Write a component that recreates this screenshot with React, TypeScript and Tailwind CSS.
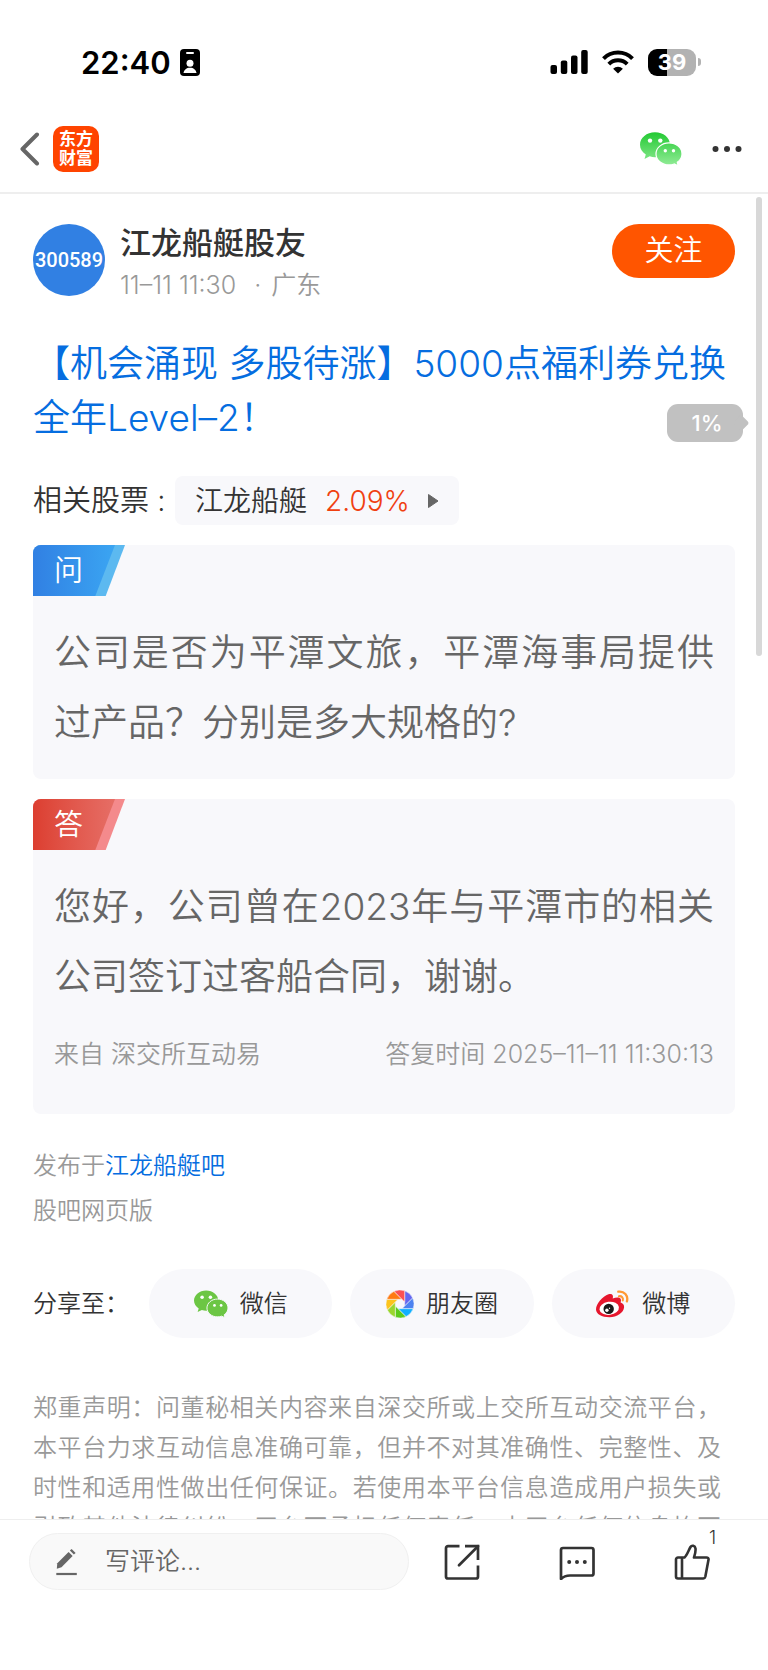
import type { ReactNode } from 'react';

const BLADE_COLORS = ['#6467f0', '#4d82f0', '#12b0ff', '#5ccb1c', '#9ad62e', '#fcc41c', '#ff7a12', '#fa5053'];

function WechatIcon({ id, from, to, outline, className }: {
  id: string;
  from: string;
  to: string;
  outline: string;
  className: string;
}) {
  return (
    <svg className={className} viewBox="0 0 42 34" fill="none" aria-hidden="true">
      <defs>
        <linearGradient id={id} x1="0" y1="0" x2="0" y2="34" gradientUnits="userSpaceOnUse">
          <stop stopColor={from} />
          <stop offset="1" stopColor={to} />
        </linearGradient>
      </defs>
      <path
        d="M15 .3C6.700 .3 0 5.800 0 12.800c0 4 2.200 7.400 5.800 9.700L4.500 27l5.200-2.700c1.700.6 3.500.9 5.300.9 8.300 0 15-5.600 15-12.500S23.300.3 15 .3z"
        fill={`url(#${id})`}
      />
      <path
        d="M29 10.900c-7.200 0-13 4.900-13 11s5.800 11 13 11c1.900 0 3.600-.3 5.200-.9l4 1.900-.9-3.600c2.900-2 4.700-5 4.700-8.400 0-6.100-5.800-11-13-11z"
        fill={`url(#${id})`}
        stroke={outline}
        strokeWidth="1.200"
      />
      <circle cx="10" cy="8.600" r="2.200" fill="#fff" />
      <circle cx="20.300" cy="8.600" r="2.200" fill="#fff" />
      <circle cx="25.300" cy="18.700" r="1.700" fill="#fff" />
      <circle cx="33.500" cy="18.700" r="1.700" fill="#fff" />
    </svg>
  );
}

function MomentsIcon() {
  return (
    <svg className="h-7 w-7" viewBox="-14 -14 28 28" aria-hidden="true">
      {BLADE_COLORS.map((color, i) => (
        <path
          key={color}
          d="M4.700-13.200A14 14 0 0 1 12.660-6.010L4.700 1.950z"
          fill={color}
          stroke="#f8f8fb"
          strokeWidth=".5"
          transform={`rotate(${i * 45})`}
        />
      ))}
    </svg>
  );
}

function WeiboIcon() {
  return (
    <svg className="h-7 w-[34px]" viewBox="0 0 34 28" fill="none" aria-hidden="true">
      <path
        d="M0 19.500C0 14 6.500 6.500 12.500 4.300c3.500-1.200 5.300.8 4.200 4.200 3.200-1.400 6.800-1.700 7.900.3.700 1.200.4 2.500 0 3.700 2.200.8 3.700 2.300 3.500 4.700C27.600 22.800 21 27.200 13.500 27.200 5.700 27.200 0 24 0 19.500z"
        fill="#e6162d"
      />
      <ellipse cx="13.200" cy="18.300" rx="9.800" ry="6.500" fill="#fff" transform="rotate(-8 13.200 18.300)" />
      <circle cx="12.700" cy="18.900" r="5.200" fill="#1a1a1a" />
      <circle cx="10.900" cy="20.300" r="1.700" fill="#fff" />
      <circle cx="13.500" cy="18.300" r=".7" fill="#fff" />
      <path d="M22.300 1.700c5.800-.9 10.300 4 8.600 9.700" stroke="#ff9933" strokeWidth="2.300" strokeLinecap="round" />
      <path d="M22.900 6.200c2.800-.5 4.700 1.800 3.900 4.300" stroke="#ff9933" strokeWidth="2" strokeLinecap="round" />
    </svg>
  );
}

function StatusBar() {
  return (
    <div className="flex h-[106px] shrink-0 items-center justify-between pt-[18px] pr-[67px] pl-[81px]">
      <div className="flex items-center gap-[9px]">
        <span className="text-[31px] leading-none font-semibold text-black">22:40</span>
        <svg className="h-[27px] w-5" viewBox="0 0 20 27" aria-hidden="true">
          <rect width="20" height="27" rx="4" fill="#000" />
          <rect x="6" y="3" width="8" height="2" rx="1" fill="#fff" />
          <circle cx="10" cy="14.300" r="3.500" fill="#fff" />
          <path d="M3.500 24c.5-3.300 3-5.300 6.500-5.300s6 2 6.500 5.300z" fill="#fff" />
        </svg>
      </div>
      <div className="flex items-center gap-[14px]">
        <svg className="h-6 w-[38px]" viewBox="0 0 38 24" aria-hidden="true">
          <rect x="0.500" y="15" width="6.500" height="9" rx="2" />
          <rect x="10.800" y="10.500" width="6.500" height="13.500" rx="2" />
          <rect x="21" y="5.500" width="6.500" height="18.500" rx="2" />
          <rect x="31.200" y="0" width="6.500" height="24" rx="2" />
        </svg>
        <svg className="h-6 w-8" viewBox="0 0 32 24" fill="none" stroke="#000" strokeWidth="4" aria-hidden="true">
          <path d="M1.500 8.600a20.500 20.500 0 0 1 29 0" />
          <path d="M6.800 14.100a13 13 0 0 1 18.400 0" />
          <path d="M16 23.500l-4.900-4.800a7 7 0 0 1 9.800 0z" fill="#000" stroke="none" />
        </svg>
        <div className="flex items-center gap-[2px]">
          <div className="flex h-[27px] w-12 items-center justify-center rounded-[9px] bg-linear-to-r from-black from-39% to-[#b2b2b2] to-39%">
            <span className="text-[22px] leading-none font-bold text-white">39</span>
          </div>
          <div className="h-2 w-[3px] rounded-r-full bg-[#b2b2b2]" />
        </div>
      </div>
    </div>
  );
}

function NavBar() {
  return (
    <header className="flex h-[88px] shrink-0 items-center justify-between border-b-2 border-[#eeeeee] pr-[25px] pl-[19px]">
      <div className="flex items-center gap-[13px]">
        <button type="button" aria-label="返回">
          <svg className="h-[34px] w-[21px]" viewBox="0 0 21 34" fill="none" stroke="#666" strokeWidth="4" strokeLinecap="round" aria-hidden="true">
            <path d="M18 2.500L3.500 17 18 31.500" strokeLinejoin="round" />
          </svg>
        </button>
        <a href="#home" className="flex h-[46px] w-[46px] flex-col items-center justify-center rounded-[10px] bg-[#ff4400] text-[17px] leading-[19px] font-bold text-white">
          <span>东方</span>
          <span>财富</span>
        </a>
      </div>
      <div className="flex items-center gap-[29px]">
        <button type="button" aria-label="微信">
          <WechatIcon id="wechat-nav" from="#22c932" to="#93ec98" outline="#fff" className="h-[34px] w-[42px]" />
        </button>
        <button type="button" aria-label="更多">
          <svg className="h-[34px] w-8" viewBox="0 0 32 34" fill="#333" aria-hidden="true">
            <circle cx="4.500" cy="17" r="3" />
            <circle cx="16" cy="17" r="3" />
            <circle cx="27.500" cy="17" r="3" />
          </svg>
        </button>
      </div>
    </header>
  );
}

function QaCard({ label, tone, text, children }: {
  label: string;
  tone: 'blue' | 'red';
  text: string;
  children?: ReactNode;
}) {
  const isBlue = tone === 'blue';
  return (
    <section className="mt-5 overflow-hidden rounded-lg bg-[#f8f8fb]">
      <div
        className={`h-[51px] w-[92px] [clip-path:polygon(0_0,100%_0,79%_100%,0_100%)] ${
          isBlue ? 'bg-[#5cb9f0]' : 'bg-[#f48a8c]'
        }`}
      >
        <div
          className={`flex h-full w-[82px] items-center bg-linear-to-r pl-[21px] text-[29px] text-white [clip-path:polygon(0_0,100%_0,76%_100%,0_100%)] ${
            isBlue ? 'from-[#3180e3] to-[#3ba5f2]' : 'from-[#dc3e30] to-[#e66e66]'
          }`}
        >
          {label}
        </div>
      </div>
      <div className="px-[21px] pt-[22px] pb-[21px]">
        <p className="text-justify text-[37px] leading-[70px] text-[#666666]">{text}</p>
        {children}
      </div>
    </section>
  );
}

function ShareButton({ icon, label }: { icon: ReactNode; label: string }) {
  return (
    <button type="button" className="flex h-[69px] flex-1 items-center justify-center gap-3 rounded-full bg-[#f8f8fb] text-[24px] text-[#333333]">
      {icon}
      {label}
    </button>
  );
}

function BottomBar() {
  return (
    <footer className="flex h-[151px] shrink-0 items-start border-t border-[#eeeeee] bg-white pt-[13px] pr-[58px] pl-[29px]">
      <label className="flex h-[57px] min-w-0 flex-1 items-center gap-[27px] rounded-full border border-[#f0f0f0] bg-[#f9f9f9] pl-[26px]">
        <svg className="h-7 w-[22px] shrink-0" viewBox="0 0 22 28" aria-hidden="true">
          <path d="M.8 20.800l.5-5.500L12.600 3.900l4 4L5.500 19.300z" fill="#666" />
          <path d="M13.900 2.600l1.700-1.700 4 4-1.700 1.700z" fill="#666" />
          <path d="M.3 26h20.500" stroke="#666" strokeWidth="2.200" />
        </svg>
        <input
          type="text"
          aria-label="写评论"
          placeholder="写评论..."
          className="w-full min-w-0 bg-transparent text-[25px] outline-none placeholder:text-[#666666]"
        />
      </label>
      <div className="ml-[35px] flex h-[57px] items-center gap-[79px]">
        <button type="button" aria-label="分享">
          <svg className="h-9 w-9" viewBox="0 0 36 36" fill="none" stroke="#333" strokeWidth="2.700" aria-hidden="true">
            <path d="M15.500 2.200H4a2 2 0 0 0-2 2V32.500a2 2 0 0 0 2 2H32a2 2 0 0 0 2-2V21.500" />
            <path d="M21 2.200H34V16" />
            <path d="M34 2.200L15 21.300" strokeLinecap="round" />
          </svg>
        </button>
        <button type="button" aria-label="评论">
          <svg className="h-9 w-9" viewBox="0 0 36 36" fill="none" stroke="#333" strokeWidth="2.700" strokeLinejoin="round" aria-hidden="true">
            <path d="M4 4H32.500a2 2 0 0 1 2 2V29.500a2 2 0 0 1-2 2H11C7 31.500 4.500 32.500 2 35V6a2 2 0 0 1 2-2z" />
            <circle cx="10.200" cy="18" r="2" fill="#333" stroke="none" />
            <circle cx="18" cy="18" r="2" fill="#333" stroke="none" />
            <circle cx="25.800" cy="18" r="2" fill="#333" stroke="none" />
          </svg>
        </button>
        <button type="button" aria-label="点赞" className="relative">
          <svg className="h-9 w-9" viewBox="0 0 36 36" fill="none" stroke="#333" strokeWidth="2.600" strokeLinejoin="round" aria-hidden="true">
            <path d="M10.500 13.500C13 11.500 14.500 6.500 16.500 3c1.200-2 4.500-1.600 5 1.500.3 2.700-.5 6-1.500 9h12.500c1.400 0 2.300.8 2 2.200L31.300 32.800c-.3 1.200-1 1.700-2 1.700H4a2 2 0 0 1-2-2V15.500a2 2 0 0 1 2-2z" />
            <path d="M8 13.500V34.500" />
          </svg>
          <span className="absolute -top-4 left-[35px] text-[18px] leading-5 text-[#333333]">1</span>
        </button>
      </div>
    </footer>
  );
}

export default function App() {
  return (
    <div className="flex h-screen flex-col bg-white font-[Inter,'Noto_Sans_CJK_SC',sans-serif] font-[350]">
      <StatusBar />
      <NavBar />

      <div className="relative min-h-0 flex-1">
        <main className="h-full overflow-y-auto px-[33px] pt-[30px] [scrollbar-width:none]">
          {/* 作者信息 */}
          <div className="flex items-start">
            <div className="flex h-[72px] w-[72px] items-center justify-center rounded-full bg-[#3180e3] font-['Liberation_Sans_Narrow',Roboto,sans-serif] text-[20px] font-medium text-white">
              300589
            </div>
            <div className="ml-[15px] flex-1">
              <h2 className="text-[31px] leading-[38px] font-medium text-[#333333]">江龙船艇股友</h2>
              <p className="mt-1 flex items-center text-[25px] leading-[38px] text-[#999999]">
                <span>11–11 11:30</span>
                <span className="mx-[10px] pl-2">·</span>
                <span>广东</span>
              </p>
            </div>
            <button type="button" className="h-[54px] w-[123px] rounded-full bg-[#ff5500] text-[29px] text-white">
              关注
            </button>
          </div>

          <h1 className="mt-[33px] text-[37px] leading-[54px] text-[#056de0]">
            【机会涌现 多股待涨】5000点福利券兑换全年Level–2！
          </h1>

          <div className="mt-[31px] flex items-center text-[#333333]">
            <span className="w-[142px] text-[29px] whitespace-nowrap">相关股票 :</span>
            <a href="#stock" className="flex h-[49px] items-center rounded-lg bg-[#f8f8fb] px-5 text-[28px]">
              <span>江龙船艇</span>
              <span className="ml-[18px] text-[#f04010]">2.09%</span>
              <svg className="ml-[17px] h-4 w-3" viewBox="0 0 12 16" aria-hidden="true">
                <path d="M1.500 1.500L11 8l-9.500 6.500z" fill="#666" stroke="#666" strokeLinejoin="round" />
              </svg>
            </a>
          </div>

          <QaCard label="问" tone="blue" text="公司是否为平潭文旅，平潭海事局提供过产品？分别是多大规格的?" />
          <QaCard label="答" tone="red" text="您好，公司曾在2023年与平潭市的相关公司签订过客船合同，谢谢。">
            <div className="mt-6 mb-[21px] flex justify-between text-[25px] leading-9 text-[#999999]">
              <span>来自 深交所互动易</span>
              <span>答复时间 2025–11–11 11:30:13</span>
            </div>
          </QaCard>

          <div className="mt-[29px] text-[24px] leading-[45px] text-[#999999]">
            <p>
              发布于<a href="#bar" className="text-[#056de0]">江龙船艇吧</a>
            </p>
            <p>股吧网页版</p>
          </div>

          {/* 分享 */}
          <div className="mt-9 flex items-center">
            <span className="w-[116px] shrink-0 text-[24px] whitespace-nowrap text-[#333333]">分享至：</span>
            <div className="flex flex-1 gap-[18px]">
              <ShareButton
                label="微信"
                icon={<WechatIcon id="wechat-share" from="#6cc644" to="#6cc644" outline="#f8f8fb" className="h-7 w-[34px]" />}
              />
              <ShareButton label="朋友圈" icon={<MomentsIcon />} />
              <ShareButton label="微博" icon={<WeiboIcon />} />
            </div>
          </div>

          <p className="mt-[50px] pr-[14px] text-justify text-[24px] leading-10 text-[#999999]">
            郑重声明：问董秘相关内容来自深交所或上交所互动交流平台，本平台力求互动信息准确可靠，但并不对其准确性、完整性、及时性和适用性做出任何保证。若使用本平台信息造成用户损失或引致其他法律纠纷，平台不承担任何责任。本平台任何信息均不构成投资建议。
          </p>
        </main>

        {/* 滚动条和阅读进度 */}
        <div className="absolute top-[3px] right-[6px] h-[459px] w-[6px] rounded-full bg-[#d8d8d8]" />
        <div className="absolute top-[210px] right-[25px] flex items-center">
          <div className="flex h-[38px] w-[76px] items-center justify-center rounded-[11px] bg-[#c1c1c1] pl-1 text-[22px] leading-none font-medium text-white">
            1%
          </div>
          <div className="absolute -right-1 h-3 w-3 rotate-45 rounded-[3px] bg-[#c1c1c1]" />
        </div>
      </div>

      <BottomBar />
    </div>
  );
}
